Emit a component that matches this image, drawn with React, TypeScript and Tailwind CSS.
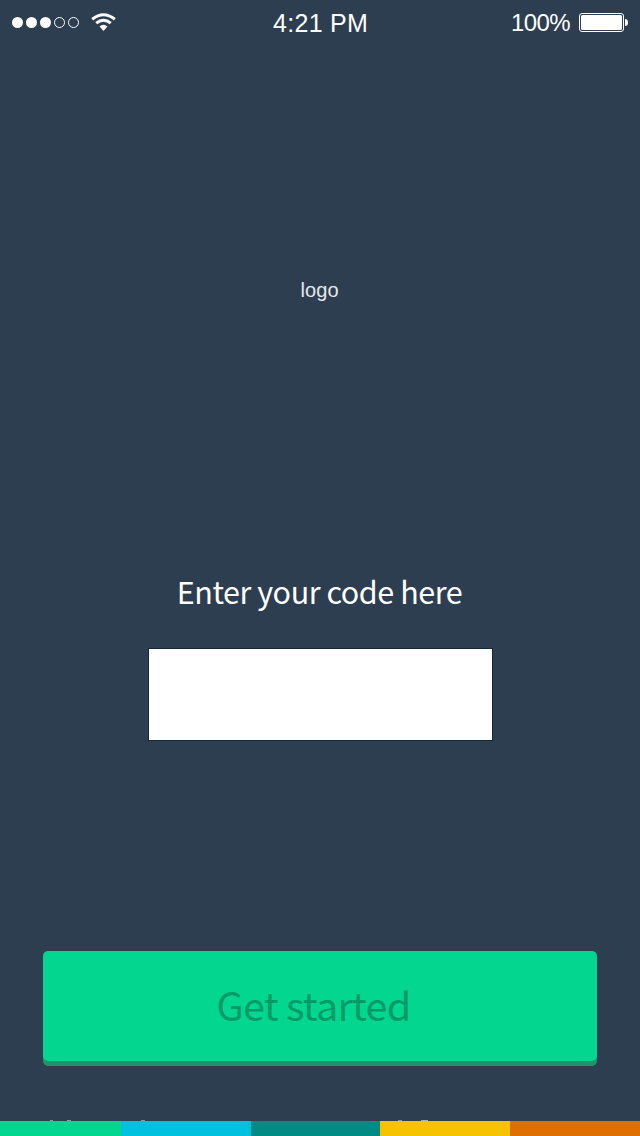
import React from "react";

function StatusBar() {
  return (
    <header className="flex h-[45px] items-center pl-3 pr-[11px] font-['Liberation_Sans',sans-serif] text-[24px] leading-[45px] text-white">
      <div className="flex w-[261px] items-center">
        <div className="flex gap-[3px]">
          <span className="size-[11px] rounded-full bg-white" />
          <span className="size-[11px] rounded-full bg-white" />
          <span className="size-[11px] rounded-full bg-white" />
          <span className="size-[11px] rounded-full border border-white" />
          <span className="size-[11px] rounded-full border border-white" />
        </div>
        <svg className="ml-3 h-[19px] w-[25px]" viewBox="0 0 25 19" fill="none" stroke="white" strokeWidth="3">
          <path d="M1.2 6.2Q12.5-2.7 23.8 6.2" />
          <path d="M5.2 10.2Q12.5 4.2 19.8 10.2" />
          <path d="M8.5 13.6Q12.5 10 16.5 13.6L12.5 18Z" fill="white" stroke="none" />
        </svg>
      </div>
      <span className="pt-0.5 text-[25px] leading-[43px] whitespace-nowrap tracking-[0.3px]">4:21 PM</span>
      <div className="ml-auto flex items-center">
        <span className="mr-[9px] tracking-[-0.6px]">100%</span>
        <svg className="h-[19px] w-[50px]" viewBox="0 0 50 19">
          <rect x="0.5" y="0.5" width="44" height="18" rx="2.5" fill="none" stroke="white" />
          <rect x="2" y="2" width="41" height="15" rx="1.5" fill="white" />
          <path d="M46 6Q49 6 49 9.5T46 13Z" fill="white" />
        </svg>
      </div>
    </header>
  );
}

function FooterStripe() {
  return (
    <footer className="mt-auto">
      <div className="flex h-px pl-[50px]">
        <span className="w-[3px] bg-[#8d959d]" />
        <span className="ml-[14px] w-1 bg-[#8d959d]" />
        <span className="ml-[70px] w-[4px] bg-[#8d959d]" />
        <span className="ml-[253px] w-1 bg-[#8d959d]" />
        <span className="ml-[19px] w-[7px] bg-[#a5acb3]" />
      </div>
      <div className="flex h-[15px]">
        <span className="w-[121px] bg-[#02d68f]" />
        <span className="w-[130px] bg-[#01c2de]" />
        <span className="w-[129px] bg-[#028a84]" />
        <span className="w-[130px] bg-[#f6c300]" />
        <span className="flex-1 bg-[#df6f00]" />
      </div>
    </footer>
  );
}

export default function App() {
  return (
    <main className="flex h-[1136px] w-[640px] flex-col overflow-hidden bg-[#2d3e50] font-['Noto_Sans_CJK_SC',sans-serif] text-white">
      <StatusBar />
      <div className="mt-[230px] pr-px text-center font-['Liberation_Sans',sans-serif] text-[20px] leading-[30px] tracking-[0.1px] text-[#e6e8ea]">logo</div>
      <label htmlFor="code" className="mt-[266px] h-[40px] pr-px text-center text-[30.5px] leading-[40px] tracking-[-0.45px] whitespace-nowrap">
        Enter your code here
      </label>
      <input id="code" className="mx-auto mt-[37px] h-[93px] w-[345px] border border-[#16273a] bg-white px-4 text-3xl text-slate-800 outline-none" />
      <button className="mx-[43px] mt-[210px] h-[110px] rounded-[5px] bg-[#02d68f] pr-[13px] pb-[5px] text-[39.5px] leading-[105px] tracking-[-0.75px] whitespace-nowrap text-[#029b68] shadow-[0_5px_0_#20936e]">
        Get started
      </button>
      <FooterStripe />
    </main>
  );
}
